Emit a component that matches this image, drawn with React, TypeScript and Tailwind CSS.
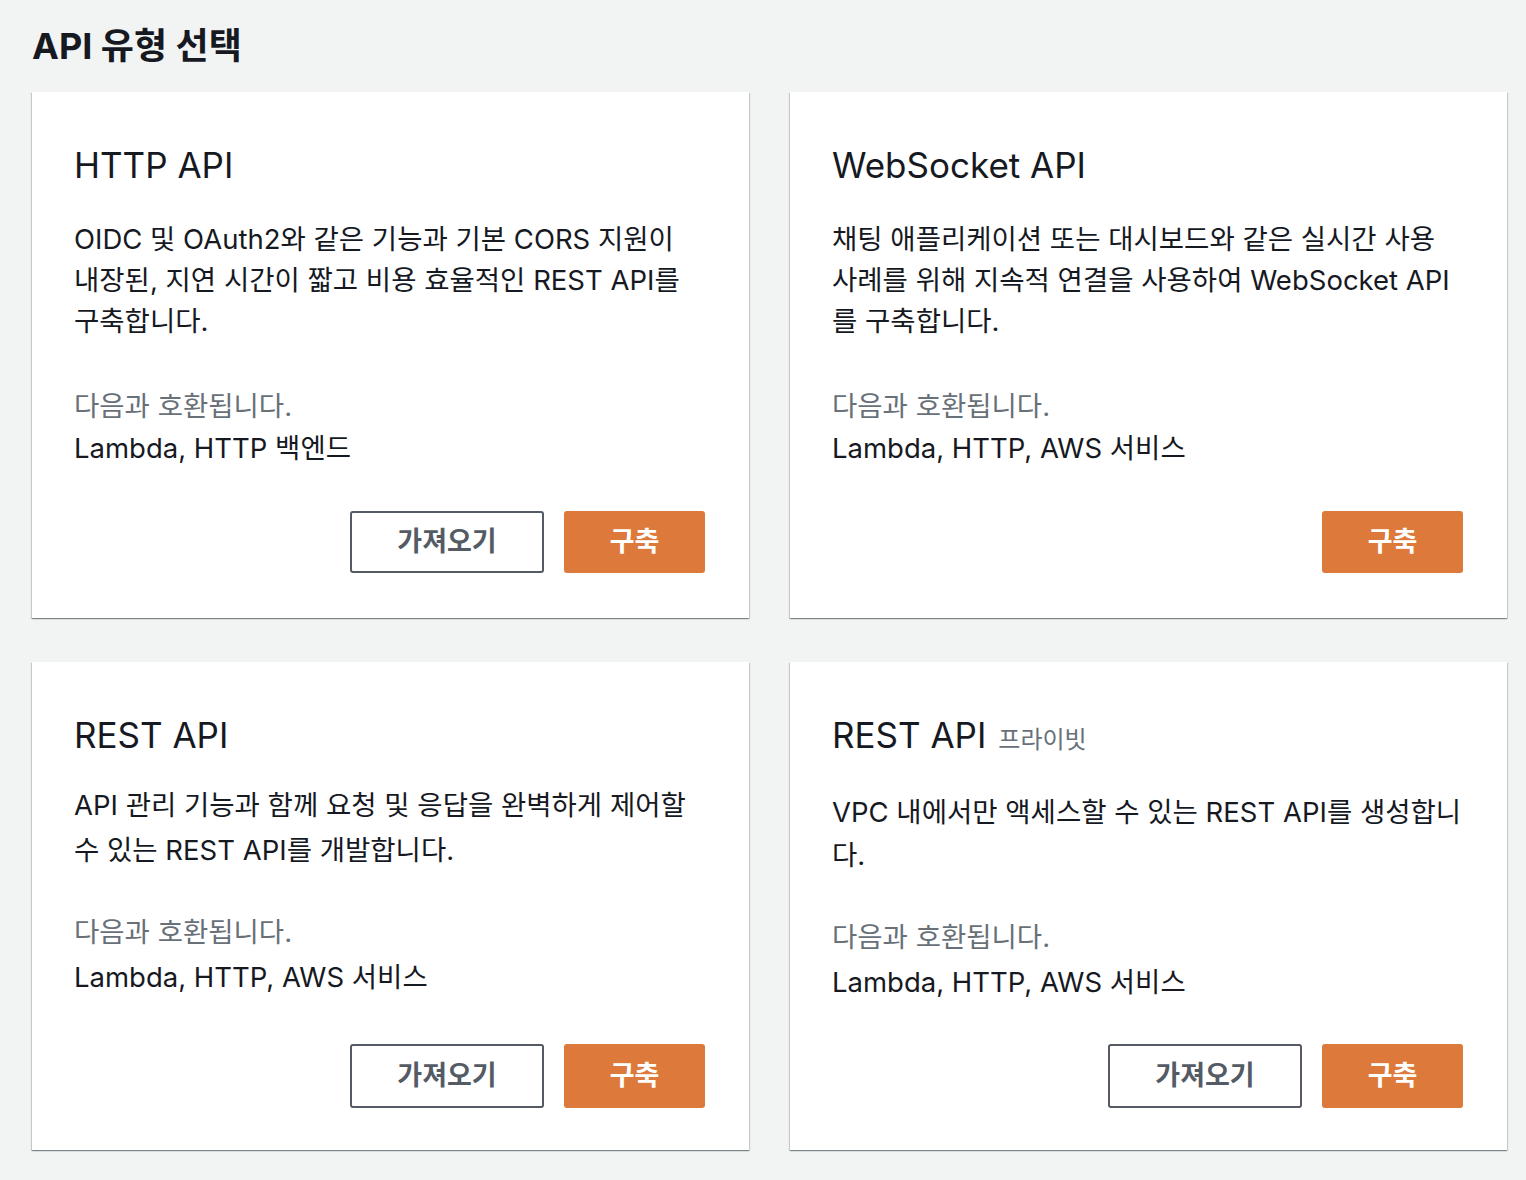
import React from 'react';

type Card = {
  title: string;
  tag?: string;
  lines: string[];
  compat: string;
  importable: boolean;
  // per-card vertical rhythm, taken from the screenshot
  bodyGap: string;
  leading: string;
  compatGap: string;
  compatLeading: string;
  btn: string;
  pad: string;
};

const cards: Card[] = [
  {
    title: 'HTTP API',
    lines: [
      'OIDC 및 OAuth2와 같은 기능과 기본 CORS 지원이',
      '내장된, 지연 시간이 짧고 비용 효율적인 REST API를',
      '구축합니다.',
    ],
    compat: 'Lambda, HTTP 백엔드',
    importable: true,
    bodyGap: 'mt-[32px]',
    leading: 'leading-[41px]',
    compatGap: 'mt-[43px]',
    compatLeading: 'leading-[42px]',
    btn: 'h-[62px]',
    pad: 'pb-[45px]',
  },
  {
    title: 'WebSocket API',
    lines: [
      '채팅 애플리케이션 또는 대시보드와 같은 실시간 사용',
      '사례를 위해 지속적 연결을 사용하여 WebSocket API',
      '를 구축합니다.',
    ],
    compat: 'Lambda, HTTP, AWS 서비스',
    importable: false,
    bodyGap: 'mt-[32px]',
    leading: 'leading-[41px]',
    compatGap: 'mt-[43px]',
    compatLeading: 'leading-[42px]',
    btn: 'h-[62px]',
    pad: 'pb-[45px]',
  },
  {
    title: 'REST API',
    lines: [
      'API 관리 기능과 함께 요청 및 응답을 완벽하게 제어할',
      '수 있는 REST API를 개발합니다.',
    ],
    compat: 'Lambda, HTTP, AWS 서비스',
    importable: true,
    bodyGap: 'mt-[26px]',
    leading: 'leading-[45px]',
    compatGap: 'mt-[37px]',
    compatLeading: 'leading-[45px]',
    btn: 'h-[64px]',
    pad: 'pb-[42px]',
  },
  {
    title: 'REST API',
    tag: '프라이빗',
    lines: ['VPC 내에서만 액세스할 수 있는 REST API를 생성합니', '다.'],
    compat: 'Lambda, HTTP, AWS 서비스',
    importable: true,
    bodyGap: 'mt-[29px]',
    leading: 'leading-[43px]',
    compatGap: 'mt-[38px]',
    compatLeading: 'leading-[45px]',
    btn: 'h-[64px]',
    pad: 'pb-[42px]',
  },
];

function ApiCard({ card }: { card: Card }) {
  return (
    <div
      className={`flex flex-col bg-white pl-[42px] pr-[44px] pt-[51px] ${card.pad} shadow-[0_1px_1px_0_rgba(0,28,36,0.3),1px_1px_1px_0_rgba(0,28,36,0.15),-1px_1px_1px_0_rgba(0,28,36,0.15)]`}
    >
      <h2 className="flex items-baseline gap-3 text-[35px] leading-[44px] text-[#16191f]">
        {card.title}
        {card.tag && <span className="text-[24px] leading-[44px] text-[#687078]">{card.tag}</span>}
      </h2>
      <div className={`${card.bodyGap} ${card.leading} text-[27.5px] text-[#16191f]`}>
        {card.lines.map((l, i) => (
          <div key={i} className="whitespace-nowrap">
            {l}
          </div>
        ))}
      </div>
      <div className={`${card.compatGap} ${card.compatLeading} text-[27.5px]`}>
        <div className="text-[#687078]">다음과 호환됩니다.</div>
        <div className="text-[#16191f]">{card.compat}</div>
      </div>
      <div className="mt-auto flex justify-end gap-[20px]">
        {card.importable && (
          <button
            className={`${card.btn} w-[194px] rounded-[3px] border-2 border-[#545b64] bg-white text-[27px] font-bold text-[#545b64]`}
          >
            가져오기
          </button>
        )}
        <button className={`${card.btn} w-[141px] rounded-[3px] bg-[#dd7a3b] text-[27px] font-bold text-white`}>
          구축
        </button>
      </div>
    </div>
  );
}

export default function App() {
  return (
    <div
      className="min-h-screen bg-[#f2f3f3] pl-[32px] pr-[19px] pt-[24px] pb-[30px]"
      style={{ fontFamily: 'Inter, "Noto Sans CJK KR", sans-serif' }}
    >
      <h1 className="text-[36px] font-bold leading-[44px] text-[#16191f]">API 유형 선택</h1>
      <div className="mt-[24px] grid grid-cols-2 grid-rows-[526px_488px] gap-x-[41px] gap-y-[44px]">
        {cards.map((c, i) => (
          <ApiCard key={i} card={c} />
        ))}
      </div>
    </div>
  );
}
